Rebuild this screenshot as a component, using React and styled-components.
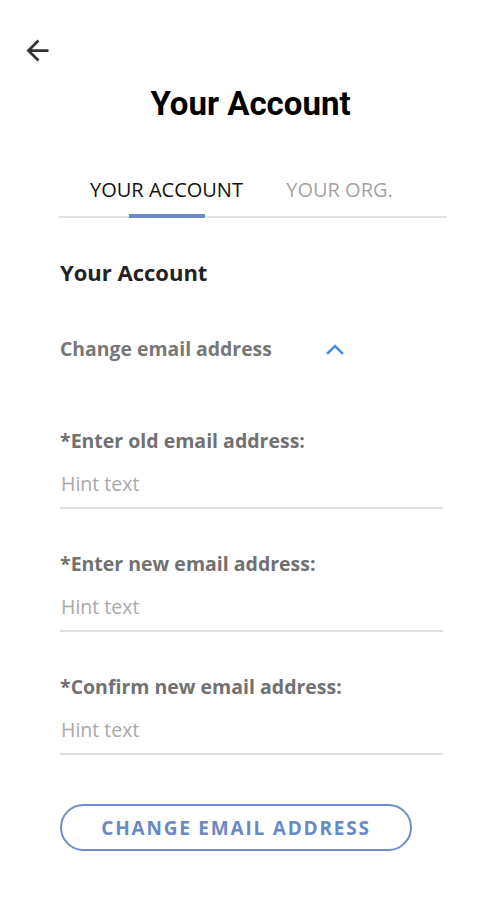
import React, { useState } from 'react';
import styled, { createGlobalStyle } from 'styled-components';

const GlobalStyle = createGlobalStyle`
  html, body {
    margin: 0;
    padding: 0;
    background: #fff;
  }
  body {
    font-family: 'Open Sans', 'Noto Sans', sans-serif;
    -webkit-font-smoothing: antialiased;
  }
  * { box-sizing: border-box; }
`;

const Page = styled.div`
  width: 501px;
  min-height: 897px;
  background: #fff;
  display: flex;
  flex-direction: column;
`;

const TopBar = styled.div`
  height: 68px;
  padding: 34px 0 0 21px;
`;

const BackButton = styled.button`
  border: 0;
  background: none;
  padding: 0;
  width: 33px;
  height: 33px;
  display: block;
  color: #333;
  cursor: pointer;
`;

const Title = styled.h1`
  margin: 16px 0 0;
  font-family: Roboto, 'Liberation Sans', sans-serif;
  font-weight: 700;
  font-size: 33px;
  line-height: 40px;
  color: #000;
  text-align: center;
`;

const Tabs = styled.div`
  margin: 52px 54px 0 59px;
  display: flex;
  justify-content: center;
  border-bottom: 2px solid #e2e2e2;
`;

const Tab = styled.button`
  width: 173px;
  border: 0;
  background: none;
  padding: 0 0 12px;
  font-family: 'Open Sans', sans-serif;
  font-size: 20px;
  line-height: 28px;
  color: ${props => props.active ? '#111' : '#a3a3a3'};
  position: relative;
  cursor: pointer;
  &::after {
    content: '';
    display: ${props => props.active ? 'block' : 'none'};
    position: absolute;
    left: 50%;
    bottom: -2px;
    width: 76px;
    margin-left: -38px;
    height: 4px;
    background: #6a8ac6;
  }
`;

const Content = styled.div`
  padding: 0 58px 0 60px;
`;

const SectionTitle = styled.h2`
  margin: 39px 0 0;
  font-size: 22px;
  line-height: 30px;
  font-weight: 700;
  color: #222;
`;

const Toggle = styled.button`
  margin-top: 48px;
  border: 0;
  background: none;
  padding: 0;
  display: flex;
  align-items: center;
  font-family: 'Open Sans', sans-serif;
  font-size: 19.4px;
  line-height: 28px;
  font-weight: 700;
  color: #777;
  cursor: pointer;
  svg {
    margin-left: 54px;
  }
`;

const Form = styled.div`
  margin-top: 65px;
  display: flex;
  flex-direction: column;
  gap: 42px;
`;

const Field = styled.label`
  display: flex;
  flex-direction: column;
`;

const Label = styled.span`
  font-size: 19.5px;
  line-height: 26px;
  font-weight: 700;
  color: #717171;
`;

const Input = styled.input`
  margin-top: 12px;
  border: 0;
  border-bottom: 2px solid #e0e0e0;
  padding: 4px 0 9px 1px;
  font-family: 'Open Sans', sans-serif;
  font-size: 19.5px;
  line-height: 28px;
  color: #333;
  outline: none;
  width: 383px;
  &::placeholder {
    color: #a9a9a9;
  }
`;

const SubmitButton = styled.button`
  margin-top: 49px;
  width: 352px;
  height: 47px;
  border: 2.5px solid #6f8dc8;
  border-radius: 24px;
  background: #fff;
  font-family: 'Open Sans', sans-serif;
  font-size: 19px;
  font-weight: 700;
  letter-spacing: 1.8px;
  color: #6a88c4;
  cursor: pointer;
`;

const fields = [
  '*Enter old email address:',
  '*Enter new email address:',
  '*Confirm new email address:',
];

export default function App() {
  const [tab, setTab] = useState(0);
  return (
    <Page>
      <GlobalStyle />
      <TopBar>
        <BackButton aria-label="Back">
          <svg width="33" height="33" viewBox="0 0 24 24" fill="currentColor">
            <path d="M20 11H7.83l5.59-5.59L12 4l-8 8 8 8 1.41-1.41L7.83 13H20v-2z" />
          </svg>
        </BackButton>
      </TopBar>
      <Title>Your Account</Title>
      <Tabs>
        <Tab active={tab === 0} onClick={() => setTab(0)}>YOUR ACCOUNT</Tab>
        <Tab active={tab === 1} onClick={() => setTab(1)}>YOUR ORG.</Tab>
      </Tabs>
      <Content>
        <SectionTitle>Your Account</SectionTitle>
        <Toggle>
          Change email address
          <svg width="18" height="11" viewBox="0 0 18 11" fill="none" stroke="#4a8ee6" strokeWidth="2.6" strokeLinecap="square">
            <path d="M2 9l7-7 7 7" />
          </svg>
        </Toggle>
        <Form>
          {fields.map(f => (
            <Field key={f}>
              <Label>{f}</Label>
              <Input placeholder="Hint text" />
            </Field>
          ))}
        </Form>
        <SubmitButton>CHANGE EMAIL ADDRESS</SubmitButton>
      </Content>
    </Page>
  );
}
